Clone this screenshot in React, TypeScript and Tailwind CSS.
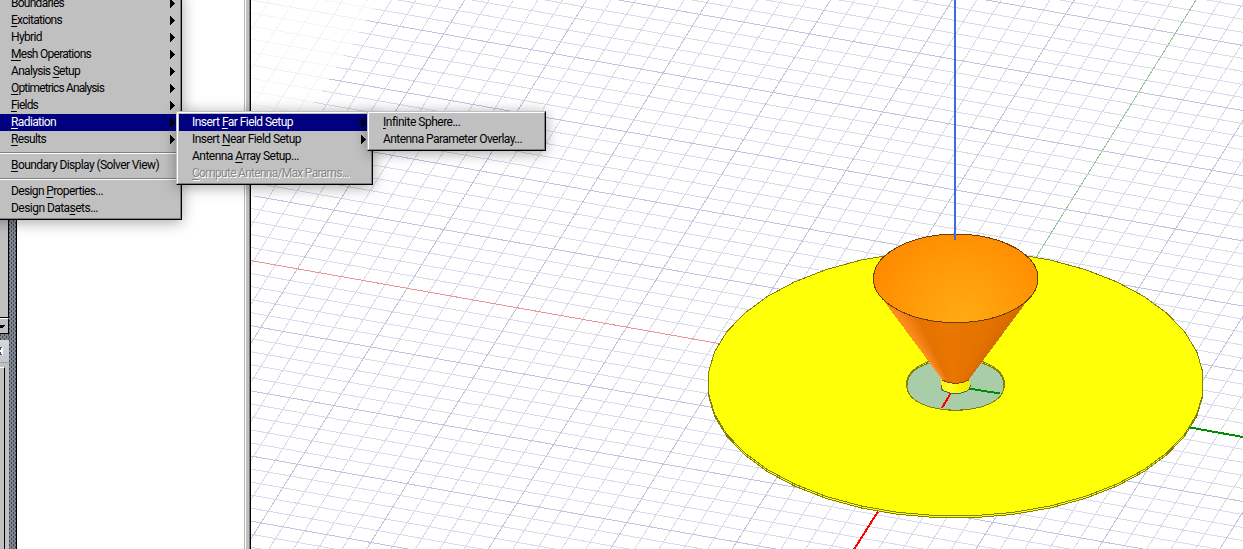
import React, { useLayoutEffect, useRef } from "react";

type Item = { text: string; mark?: number; width: number; arrow?: boolean; active?: boolean; disabled?: boolean };

function Label({ text, mark, width }: { text: string; mark?: number; width: number }) {
  const ref = useRef<HTMLSpanElement>(null);
  useLayoutEffect(() => {
    const el = ref.current;
    if (!el) return;
    el.style.letterSpacing = "0px";
    const natural = el.getBoundingClientRect().width;
    el.style.letterSpacing = `${(width - natural) / text.length}px`;
  }, [text, width]);
  return (
    <span ref={ref} className="whitespace-pre">
      {mark === undefined ? (
        text
      ) : (
        <>
          {text.slice(0, mark)}
          <span className="underline decoration-1 underline-offset-[2px] [text-decoration-skip-ink:none]">{text[mark]}</span>
          {text.slice(mark + 1)}
        </>
      )}
    </span>
  );
}

function Row({ item, pad }: { item: Item; pad: string }) {
  const tone = item.active ? "bg-[#000080] text-white" : item.disabled ? "text-[#868686] [text-shadow:1px_1px_0_#fff]" : "text-black";
  return (
    <div className={`flex h-[17px] shrink-0 items-center justify-between ${pad} ${tone}`}>
      <Label text={item.text} mark={item.mark} width={item.width} />
      {item.arrow && (
        <svg width="5" height="9" viewBox="0 0 5 9" shapeRendering="crispEdges" className="shrink-0 text-black">
          <path d="M0 0H1V1H2V2H3V3H4V4H5V5H4V6H3V7H2V8H1V9H0Z" fill="currentColor" />
        </svg>
      )}
    </div>
  );
}

function Separator() {
  return (
    <div className="flex h-[9px] shrink-0 flex-col justify-center">
      <div className="h-px bg-[#808080]" />
      <div className="h-px bg-white" />
    </div>
  );
}

function Menu({ className, children }: { className: string; children: React.ReactNode }) {
  return (
    <div className={`absolute border border-t-[#c0c0c0] border-r-black border-b-black border-l-[#c0c0c0] bg-[#c0c0c0] shadow-[0_2px_14px_rgba(0,0,0,0.36)] ${className}`}>
      <div className="flex h-full flex-col border border-t-white border-r-[#808080] border-b-[#808080] border-l-white p-px">{children}</div>
    </div>
  );
}

const mainTop: Item[] = [
  { text: "Boundaries", width: 53, arrow: true },
  { text: "Excitations", mark: 0, width: 51, arrow: true },
  { text: "Hybrid", width: 31, arrow: true },
  { text: "Mesh Operations", mark: 0, width: 80, arrow: true },
  { text: "Analysis Setup", mark: 9, width: 69, arrow: true },
  { text: "Optimetrics Analysis", mark: 0, width: 93, arrow: true },
  { text: "Fields", mark: 0, width: 27, arrow: true },
  { text: "Radiation", mark: 0, width: 45, arrow: true, active: true },
  { text: "Results", mark: 0, width: 35, arrow: true },
];
const mainMid: Item = { text: "Boundary Display (Solver View)", mark: 0, width: 148 };
const mainEnd: Item[] = [
  { text: "Design Properties...", mark: 7, width: 92 },
  { text: "Design Datasets...", mark: 11, width: 87 },
];
const sub: Item[] = [
  { text: "Insert Far Field Setup", mark: 7, width: 101, arrow: true, active: true },
  { text: "Insert Near Field Setup", mark: 7, width: 109, arrow: true },
  { text: "Antenna Array Setup...", mark: 8, width: 107 },
  { text: "Compute Antenna/Max Params...", mark: 0, width: 157, disabled: true },
];
const subsub: Item[] = [
  { text: "Infinite Sphere...", mark: 0, width: 77 },
  { text: "Antenna Parameter Overlay...", width: 139 },
];

const OX = 956;
const OY = 385.5;
const SLOPE = 0.1772;
const LEAN = 0.623;
const STEP_X = 24.38;
const STEP_Y = 13.03;

function gridPath(major: boolean) {
  let d = "";
  for (let i = -50; i <= 45; i++) {
    if (i === 0 || (i % 5 === 0) !== major) continue;
    const c = OY + i * STEP_Y;
    d += `M200 ${(c + (200 - OX) * SLOPE).toFixed(2)}L1250 ${(c + (1250 - OX) * SLOPE).toFixed(2)}`;
  }
  for (let i = -60; i <= 30; i++) {
    if (i === 0 || (i % 5 === 0) !== major) continue;
    const c = OX + i * STEP_X;
    d += `M${(c + OY * LEAN).toFixed(2)} 0L${(c - (560 - OY) * LEAN).toFixed(2)} 560`;
  }
  return d;
}

function ring(cx: number, cy: number, rx: number, ry: number, n = 40) {
  const pts: string[] = [];
  for (let i = 0; i < n; i++) {
    const a = ((i + 0.5) / n) * Math.PI * 2;
    pts.push(`${(cx + rx * Math.cos(a)).toFixed(2)},${(cy + ry * Math.sin(a)).toFixed(2)}`);
  }
  return pts.join(" ");
}

const shades: [number, number[]][] = [
  [0, [208, 102, 0]],
  [35, [214, 106, 0]],
  [65, [228, 114, 0]],
  [95, [234, 118, 0]],
  [116, [228, 114, 2]],
  [128, [242, 128, 20]],
  [142, [255, 140, 30]],
  [162, [255, 136, 20]],
  [190, [255, 128, 0]],
];

function shade(a: number) {
  for (let i = 1; i < shades.length; i++) {
    const [a1, c1] = shades[i];
    const [a0, c0] = shades[i - 1];
    if (a <= a1) {
      const t = Math.max(0, (a - a0) / (a1 - a0));
      return `rgb(${c0.map((v, k) => Math.round(v + (c1[k] - v) * t)).join(",")})`;
    }
  }
  return "rgb(255,128,0)";
}

/* Facets are ordered from the silhouette towards the viewer. */
function coneFacets() {
  const out: { pts: string; fill: string }[] = [];
  const at = (a: number, cx: number, cy: number, rx: number, ry: number) => {
    const r = (a * Math.PI) / 180;
    return `${(cx + rx * Math.cos(r)).toFixed(2)},${(cy + ry * Math.sin(r)).toFixed(2)}`;
  };
  const angles: number[] = [];
  for (let a = -24; a <= 201; a += 3) angles.push(a);
  angles.sort((p, q) => Math.abs(q + 1.5 - 90) - Math.abs(p + 1.5 - 90));
  for (const a of angles) {
    const lo = a - 0.4;
    const hi = a + 3.4;
    out.push({
      pts: [at(lo, 955.5, 278.5, 82, 44), at(hi, 955.5, 278.5, 82, 44), at(hi, 955.5, 376, 15, 7.7), at(lo, 955.5, 376, 15, 7.7)].join(" "),
      fill: shade(a + 1.5),
    });
  }
  return out;
}

function Scene() {
  return (
    <svg width="992" height="549" viewBox="251 0 992 549" className="block shrink-0" shapeRendering="crispEdges" fill="none">
      <defs>
        <clipPath id="near">
          <path d="M379.5 0H1243V549H31Z" />
        </clipPath>
        <clipPath id="far">
          <path d="M251 0H379.5L251 206Z" />
        </clipPath>
        <radialGradient id="mouth" gradientUnits="userSpaceOnUse" cx="962" cy="316" r="92">
          <stop offset="0" stopColor="#ffaa12" />
          <stop offset="0.5" stopColor="#ff9c0a" />
          <stop offset="1" stopColor="#ff8c00" />
        </radialGradient>
        <linearGradient id="feed" x1="0" x2="1">
          <stop offset="0" stopColor="#fff200" />
          <stop offset="0.3" stopColor="#ffff30" />
          <stop offset="0.6" stopColor="#faf600" />
          <stop offset="1" stopColor="#f0ea00" />
        </linearGradient>
      </defs>
      <rect x="251" width="992" height="549" fill="#fff" />
      <g clipPath="url(#far)">
        <path d={gridPath(false)} stroke="#f5f5f5" />
        <path d={gridPath(true)} stroke="#f1f1f1" />
      </g>
      <g clipPath="url(#near)">
        <path d={gridPath(false)} stroke="#dadaea" />
        <path d={gridPath(true)} stroke="#c3c3df" />
      </g>
      <path d="M251 260.6L720 343.7" stroke="#e69696" />
      <path d="M1196 0L1035 259" stroke="#98c298" />
      <path d="M878 511.5L854 549.5" stroke="#ff0000" strokeWidth="2" />
      <path d="M1189 427.3L1243 437" stroke="#008c00" strokeWidth="2" />

      <polygon points={ring(955.7, 385, 248, 133)} fill="#ffff08" stroke="#80800a" />
      <polygon points={ring(955.7, 383, 248, 133)} fill="#ffff08" stroke="#80800a" />

      <polygon points={ring(955.5, 383.8, 49.2, 26.6)} fill="#ffff08" stroke="#80800a" />
      <path d="M907 387C906 367 932 359.5 955.5 359.5S1005 367 1004 387C1003 402 980 410.2 955.5 410.2S908 402 907 387Z" fill="#a9cda9" stroke="#80800a" />

      <path d="M950.5 393.5L942 408" stroke="#ff0000" strokeWidth="2" />
      <path d="M969 388.6L1000 393.5" stroke="#008c00" strokeWidth="2" />
      <path d="M941 376V387A14.5 6.5 0 0 0 970 387V376Z" fill="url(#feed)" />
      <path d="M941 385V387A14.5 6.5 0 0 0 970 387V385" stroke="#4d6650" />

      {coneFacets().map((f, i) => (
        <polygon key={i} points={f.pts} fill={f.fill} />
      ))}
      <path d="M942 380Q955.5 387 969 380" stroke="#8a4200" />
      <ellipse cx="955.7" cy="278.4" rx="82.3" ry="44.2" fill="url(#mouth)" stroke="#6e3c08" />
      <rect x="954" y="0" width="2" height="240" fill="#4169e1" />
    </svg>
  );
}

function Hatch({ className }: { className: string }) {
  return (
    <svg className={className} shapeRendering="crispEdges">
      <defs>
        <pattern id="dots" width="4" height="4" patternUnits="userSpaceOnUse">
          <rect width="4" height="4" fill="#848484" />
          <rect width="1" height="2" fill="#34496e" />
          <rect x="2" y="2" width="1" height="2" fill="#34496e" />
        </pattern>
      </defs>
      <rect width="100%" height="100%" fill="url(#dots)" />
    </svg>
  );
}

function LeftDock() {
  return (
    <div className="flex h-full w-[17px] shrink-0 border-r border-black">
      <div className="flex h-full w-[9px] shrink-0 flex-col bg-[#c0c0c0]">
        <div className="h-[318px] shrink-0 border-r border-b border-black" />
        <div className="flex h-[16px] shrink-0 flex-col border-t border-r border-b border-black border-t-white pt-[6px]">
          <svg width="6" height="4" viewBox="0 0 6 4" shapeRendering="crispEdges">
            <path d="M0 0H5V1H4V2H3V3H0Z" fill="#000" />
          </svg>
        </div>
        <Hatch className="h-[6px] w-[9px] shrink-0" />
        <div className="flex h-[23px] shrink-0 items-center border-b border-[#a0a0a0] bg-linear-to-b from-[#d4d8de] to-[#c0c4cc]">
          <svg width="3" height="8" viewBox="0 0 3 8" shapeRendering="crispEdges">
            <rect width="3" height="8" fill="#fff" />
            <path d="M0 0H2V1H1V3H0ZM0 5H1V7H2V8H0Z" fill="#555" />
          </svg>
        </div>
        <div className="h-[4px] shrink-0" />
        <div className="mr-[4px] flex-1 border-t border-r border-t-white border-r-black" />
      </div>
      <Hatch className="h-full w-[7px] shrink-0" />
    </div>
  );
}

export default function App() {
  return (
    <div className="relative flex h-[549px] w-[1243px] overflow-hidden bg-white font-[Roboto,'Liberation_Sans',sans-serif] text-[12px] leading-[17px]">
      <LeftDock />
      <div className="h-full flex-1 bg-white" />
      <div className="flex h-full w-[7px] shrink-0 border-r border-l border-l-[#b4b4b4] border-r-black">
        <div className="w-px bg-white" />
        <div className="flex-1 border-r border-[#808080] bg-[#c0c0c0]" />
      </div>
      <Scene />

      <Menu className="top-[-8px] left-[-10px] h-[228px] w-[192px]">
        {mainTop.map((it) => (
          <Row key={it.text} item={it} pad="pr-[4px] pl-[18px]" />
        ))}
        <Separator />
        <Row item={mainMid} pad="pl-[18px]" />
        <Separator />
        {mainEnd.map((it) => (
          <Row key={it.text} item={it} pad="pl-[18px]" />
        ))}
      </Menu>
      <Menu className="top-[111px] left-[176px] h-[74px] w-[197px]">
        {sub.map((it) => (
          <Row key={it.text} item={it} pad="pr-[4px] pl-[13px]" />
        ))}
      </Menu>
      <Menu className="top-[111px] left-[367px] h-[40px] w-[179px]">
        {subsub.map((it) => (
          <Row key={it.text} item={it} pad="pl-[13px]" />
        ))}
      </Menu>
    </div>
  );
}
